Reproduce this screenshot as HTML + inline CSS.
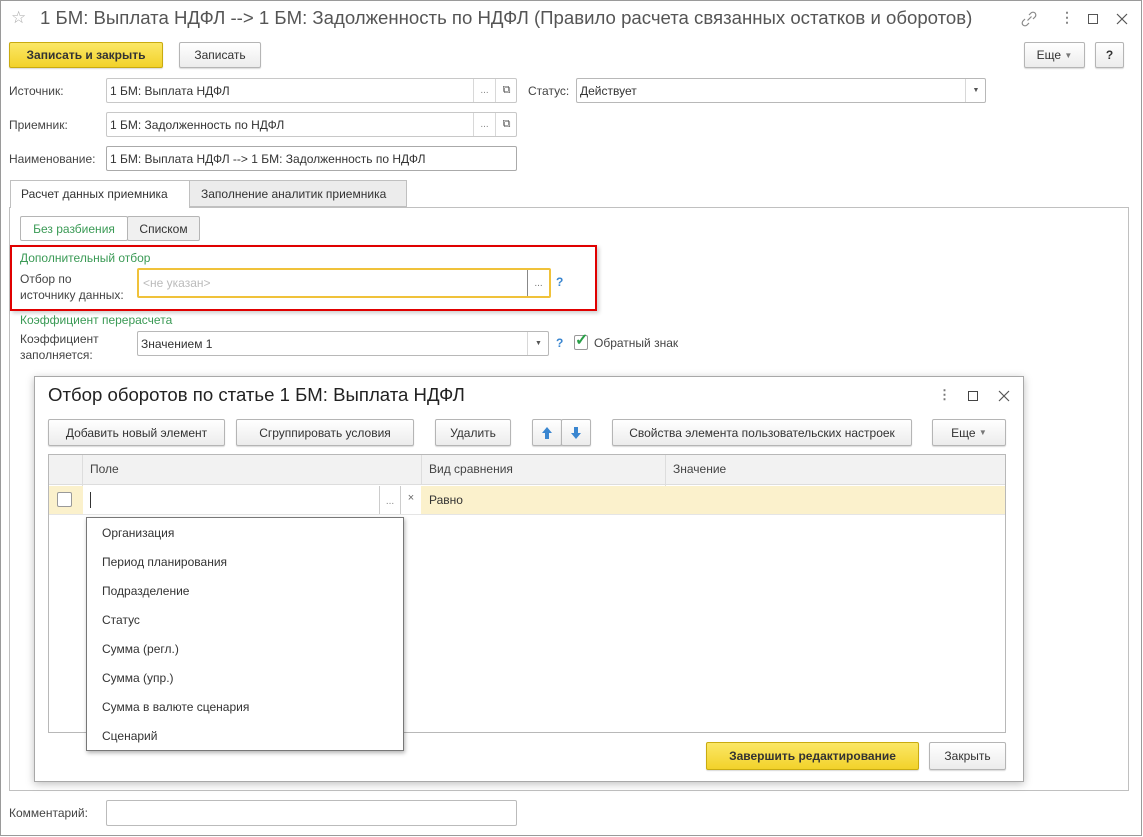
<!DOCTYPE html>
<html><head><meta charset="utf-8"><style>
*{box-sizing:border-box;margin:0;padding:0}
body{width:1143px;height:837px;background:#fff;font-family:"Liberation Sans",Arial,sans-serif;font-size:12px;color:#333;position:relative;overflow:hidden}
.a{position:absolute}
.btn{position:absolute;border:1px solid #b5b5b5;border-radius:2px;background:linear-gradient(#fff,#ececec);box-shadow:0 1px 1px rgba(0,0,0,.15);display:flex;align-items:center;justify-content:center;color:#333;font-size:12px}
.y{background:linear-gradient(#fbe766,#f2d22a);border-color:#c9ab10;font-weight:bold}
.inp{position:absolute;border:1px solid #c8c8c8;border-radius:2px;background:#fff;display:flex;align-items:center;padding-left:3px;color:#333}
.sep{position:absolute;top:0;bottom:0;border-left:1px solid #d8d8d8;display:flex;align-items:center;justify-content:center;color:#888;font-size:10px}
.lbl{position:absolute;color:#444}
.g{color:#3a9a55}
.item{position:absolute;left:15px;color:#333}
</style></head><body>
<div class="a" style="left:0;top:0;width:1142px;height:836px;border:1px solid #9a9a9a"></div>
<div class="a" style="left:11px;top:8px;font-size:17px;color:#aaa">☆</div>
<div class="a" style="left:40px;top:7px;font-size:18.6px;color:#555">1 БМ: Выплата НДФЛ --&gt; 1 БМ: Задолженность по НДФЛ (Правило расчета связанных остатков и оборотов)</div>
<svg class="a" style="left:1020px;top:10px" width="18" height="18" viewBox="0 0 18 18" fill="none" stroke="#888" stroke-width="1.2"><path d="M7.5 10.5l4-4"/><path d="M9 5l2-2a2.8 2.8 0 0 1 4 4l-2 2"/><path d="M9 13l-2 2a2.8 2.8 0 0 1-4-4l2-2"/></svg>
<div class="a" style="left:1060px;top:9px;font-size:14px;color:#888;font-weight:bold">⋮</div>
<div class="a" style="left:1088px;top:14px;width:10px;height:10px;border:1px solid #555"></div>
<svg class="a" style="left:1116px;top:13px" width="12" height="12" stroke="#555" stroke-width="1.2"><path d="M1 1L11 11M11 1L1 11"/></svg>

<div class="btn y" style="left:9px;top:42px;width:154px;height:26px">Записать и закрыть</div>
<div class="btn" style="left:179px;top:42px;width:82px;height:26px">Записать</div>
<div class="btn" style="left:1024px;top:42px;width:61px;height:26px">Еще&nbsp;<span style="font-size:8px;color:#777">▼</span></div>
<div class="btn" style="left:1095px;top:42px;width:29px;height:26px;font-weight:bold">?</div>

<div class="lbl" style="left:9px;top:84px">Источник:</div>
<div class="inp" style="left:106px;top:78px;width:411px;height:25px">1 БМ: Выплата НДФЛ<div class="sep" style="left:366px;width:22px">...</div><div class="sep" style="left:388px;width:22px;font-size:11px;color:#555">⧉</div></div>
<div class="lbl" style="left:528px;top:84px">Статус:</div>
<div class="inp" style="left:576px;top:78px;width:410px;height:25px;border-color:#b8b8b8">Действует<div class="sep" style="left:388px;width:21px;color:#555;font-size:7px">▼</div></div>

<div class="lbl" style="left:9px;top:118px">Приемник:</div>
<div class="inp" style="left:106px;top:112px;width:411px;height:25px">1 БМ: Задолженность по НДФЛ<div class="sep" style="left:366px;width:22px">...</div><div class="sep" style="left:388px;width:22px;font-size:11px;color:#555">⧉</div></div>

<div class="lbl" style="left:9px;top:152px">Наименование:</div>
<div class="inp" style="left:106px;top:146px;width:411px;height:25px;border-color:#aaa">1 БМ: Выплата НДФЛ --&gt; 1 БМ: Задолженность по НДФЛ</div>

<div class="a" style="left:9px;top:207px;width:1120px;height:584px;border:1px solid #c0c0c0"></div>
<div class="a" style="left:10px;top:180px;width:180px;height:28px;border:1px solid #c0c0c0;border-bottom:none;background:#fff;padding:6px 0 0 10px">Расчет данных приемника</div>
<div class="a" style="left:189px;top:180px;width:218px;height:27px;border:1px solid #c0c0c0;background:#ececec;padding:6px 0 0 11px">Заполнение аналитик приемника</div>

<div class="btn" style="left:20px;top:216px;width:108px;height:25px;background:#fff;box-shadow:none;color:#3a9a55">Без разбиения</div>
<div class="btn" style="left:127px;top:216px;width:73px;height:25px;box-shadow:none;background:#f0f0f0">Списком</div>

<div class="a" style="left:10px;top:245px;width:587px;height:66px;border:2px solid #e00000;box-shadow:2px 2px 4px rgba(0,0,0,.2)"></div>
<div class="a g" style="left:20px;top:251px">Дополнительный отбор</div>
<div class="lbl" style="left:20px;top:271px;line-height:16px">Отбор по<br>источнику данных:</div>
<div class="inp" style="left:137px;top:268px;width:414px;height:30px;border:2px solid #f0c23a;color:#bbb;padding-left:4px">&lt;не указан&gt;<div class="sep" style="left:388px;width:22px;border-color:#888;color:#777">...</div></div>
<div class="a" style="left:556px;top:275px;color:#3a86d0;font-weight:bold">?</div>

<div class="a g" style="left:20px;top:313px">Коэффициент перерасчета</div>
<div class="lbl" style="left:20px;top:331px;line-height:16px">Коэффициент<br>заполняется:</div>
<div class="inp" style="left:137px;top:331px;width:412px;height:25px;border-color:#b8b8b8">Значением 1<div class="sep" style="left:389px;width:22px;color:#555;font-size:7px">▼</div></div>
<div class="a" style="left:556px;top:336px;color:#3a86d0;font-weight:bold">?</div>
<div class="a" style="left:574px;top:335px;width:14px;height:15px;border:1px solid #999;border-radius:2px"></div>
<div class="a" style="left:575px;top:330px;color:#2aa048;font-size:16px;font-weight:bold">✓</div>
<div class="lbl" style="left:594px;top:336px">Обратный знак</div>

<!-- modal -->
<div class="a" style="left:34px;top:376px;width:990px;height:406px;border:1px solid #a8a8a8;background:#fff;box-shadow:0 2px 8px rgba(0,0,0,.25)"></div>
<div class="a" style="left:48px;top:384px;font-size:18.6px;color:#222">Отбор оборотов по статье 1 БМ: Выплата НДФЛ</div>
<div class="a" style="left:938px;top:387px;font-size:13px;color:#777;font-weight:bold">⋮</div>
<div class="a" style="left:968px;top:391px;width:10px;height:10px;border:1px solid #444"></div>
<svg class="a" style="left:998px;top:390px" width="12" height="12" stroke="#555" stroke-width="1.2"><path d="M1 1L11 11M11 1L1 11"/></svg>

<div class="btn" style="left:48px;top:419px;width:177px;height:27px">Добавить новый элемент</div>
<div class="btn" style="left:236px;top:419px;width:178px;height:27px">Сгруппировать условия</div>
<div class="btn" style="left:435px;top:419px;width:76px;height:27px">Удалить</div>
<div class="btn" style="left:532px;top:419px;width:30px;height:27px"><svg width="12" height="14"><path d="M6 1L11 7H8V13H4V7H1Z" fill="#3a86d0"/></svg></div>
<div class="btn" style="left:561px;top:419px;width:30px;height:27px"><svg width="12" height="14"><path d="M6 13L11 7H8V1H4V7H1Z" fill="#3a86d0"/></svg></div>
<div class="btn" style="left:612px;top:419px;width:300px;height:27px">Свойства элемента пользовательских настроек</div>
<div class="btn" style="left:932px;top:419px;width:74px;height:27px">Еще&nbsp;<span style="font-size:8px;color:#777">▼</span></div>

<div class="a" style="left:48px;top:454px;width:958px;height:279px;border:1px solid #b8b8b8"></div>
<div class="a" style="left:49px;top:455px;width:956px;height:30px;background:#f2f2f2;border-bottom:1px solid #ddd"></div>
<div class="a" style="left:82px;top:455px;height:59px;border-left:1px solid #ddd"></div>
<div class="a" style="left:421px;top:455px;height:30px;border-left:1px solid #ddd"></div>
<div class="a" style="left:665px;top:455px;height:59px;border-left:1px solid #ddd"></div>
<div class="lbl" style="left:90px;top:462px">Поле</div>
<div class="lbl" style="left:429px;top:462px">Вид сравнения</div>
<div class="lbl" style="left:673px;top:462px">Значение</div>
<div class="a" style="left:49px;top:486px;width:956px;height:29px;background:#fbf1cc;border-bottom:1px solid #e5e5e5"></div>
<div class="a" style="left:57px;top:492px;width:15px;height:15px;border:1px solid #999;border-radius:2px;background:#fff"></div>
<div class="a" style="left:83px;top:486px;width:338px;height:28px;background:#fff"></div>
<div class="a" style="left:90px;top:492px;width:1px;height:16px;background:#333"></div>
<div class="a" style="left:379px;top:486px;width:21px;height:28px;border-left:1px solid #ccc;color:#888;font-size:10px;text-align:center;padding-top:10px">...</div>
<div class="a" style="left:400px;top:486px;width:21px;height:28px;border-left:1px solid #ccc;color:#666;font-size:11px;text-align:center;padding-top:6px">×</div>
<div class="lbl" style="left:429px;top:493px;color:#333">Равно</div>

<div class="a" style="left:86px;top:517px;width:318px;height:234px;border:1px solid #777;background:#fff;box-shadow:1px 2px 4px rgba(0,0,0,.3)">
<div class="item" style="top:8px">Организация</div>
<div class="item" style="top:37px">Период планирования</div>
<div class="item" style="top:66px">Подразделение</div>
<div class="item" style="top:95px">Статус</div>
<div class="item" style="top:124px">Сумма (регл.)</div>
<div class="item" style="top:153px">Сумма (упр.)</div>
<div class="item" style="top:182px">Сумма в валюте сценария</div>
<div class="item" style="top:211px">Сценарий</div>
</div>

<div class="btn y" style="left:706px;top:742px;width:213px;height:28px">Завершить редактирование</div>
<div class="btn" style="left:929px;top:742px;width:77px;height:28px">Закрыть</div>

<div class="lbl" style="left:9px;top:806px">Комментарий:</div>
<div class="inp" style="left:106px;top:800px;width:411px;height:26px;border-color:#bbb"></div>
</body></html>
